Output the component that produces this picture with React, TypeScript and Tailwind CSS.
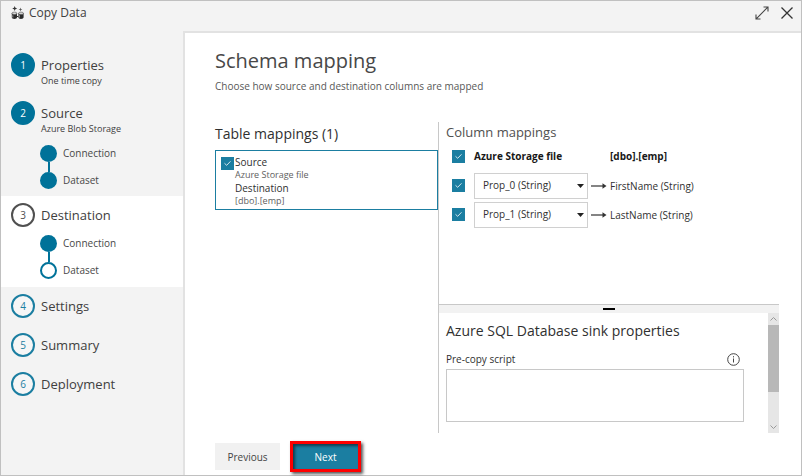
import { useState } from "react";
import type { ReactNode } from "react";

function CopyDataIcon() {
  return (
    <svg width="14" height="14" viewBox="0 0 14 14" aria-hidden="true">
      <path d="M3.7 0l.7 1.8 1.8.7-1.8.7L3.7 5 3 3.2l-1.8-.7L3 1.800z" fill="#333" />
      <path d="M9.500 1.600l.5 1.400 1.400.5-1.400.5-.5 1.400L9 4l-1.400-.5L9 3z" fill="#555" />
      <path d="M.8 7h5.200v4.600q0 1.400-2.600 1.400T.8 11.600zM7.400 7h5.200v4.600q0 1.400-2.600 1.400t-2.600-1.400z" fill="#2a2a2a" />
      <ellipse cx="3.400" cy="7.300" rx="2.500" ry="1.200" fill="#d8d8d8" stroke="#555" strokeWidth=".6" />
      <ellipse cx="10" cy="7.300" rx="2.500" ry="1.200" fill="#d8d8d8" stroke="#555" strokeWidth=".6" />
      <path d="M1.800 9.300v2.200M8.400 9.300v2.200" stroke="#aaa" strokeWidth=".9" />
      <path d="M6 10.500h1.400" stroke="#2a2a2a" />
    </svg>
  );
}

function Check({ label }: { label: string }) {
  const [on, setOn] = useState(true);
  return (
    <span className="grid size-[13px] shrink-0">
      <input
        type="checkbox"
        aria-label={label}
        checked={on}
        onChange={() => setOn(!on)}
        className="col-start-1 row-start-1 size-[13px] appearance-none border border-[#1b7ea1] bg-white checked:bg-[#1b7ea1]"
      />
      {on && (
        <svg viewBox="0 0 13 13" className="pointer-events-none col-start-1 row-start-1 size-[13px]" aria-hidden="true">
          <path d="M3.5 6.3l2.2 2L9.5 4.3" fill="none" stroke="#e4f1f5" strokeWidth="0.9" />
        </svg>
      )}
    </span>
  );
}

type State = "done" | "current" | "todo";

const badge: Record<State, string> = {
  done: "border-[#007299] bg-[#007299] text-white",
  current: "border-[#505050] bg-white text-[#505050]",
  todo: "border-[#1b7ea1] bg-[#f6f6f6] text-[#1b7ea1]",
};

function Step({ n, title, note, state }: { n: number; title: string; note?: string; state: State }) {
  return (
    <a href={"#step-" + n} className="flex gap-1.5 pl-2.5">
      <span className={`flex size-6 shrink-0 items-center justify-center rounded-full border-2 text-[10px] leading-5 ${badge[state]}`}>
        {n}
      </span>
      <span className="flex flex-col">
        <span className="text-[13px] leading-6 text-[#404040]">{title}</span>
        {note && <span className="text-[9px] leading-2 text-[#404040]">{note}</span>}
      </span>
    </a>
  );
}

function SubSteps({ datasetDone }: { datasetDone: boolean }) {
  return (
    <ul className="pl-[39px] text-[10px] leading-[17px] text-[#484848]">
      <li className="flex items-center gap-1.5">
        <span className="size-[17px] rounded-full bg-[#007299]" />
        <a href="#connection">Connection</a>
      </li>
      <li aria-hidden="true" className="ml-2 h-2.5 w-0.5 bg-[#007299]" />
      <li className="flex items-center gap-1.5">
        <span className={`size-[17px] rounded-full border-2 border-[#007299] ${datasetDone ? "bg-[#007299]" : "bg-white"}`} />
        <a href="#dataset">Dataset</a>
      </li>
    </ul>
  );
}

function MappingRow({ from, to }: { from: string; to: string }) {
  return (
    <tr className="h-[29px]">
      <td className="p-0 align-middle">
        <Check label={"Map " + to} />
      </td>
      <td className="p-0">
        <span className="grid items-center">
          <select
            aria-label={"Source column for " + to}
            className="col-start-1 row-start-1 h-[26px] w-full appearance-none border border-[#d0d0d0] bg-white pl-2 text-[10px] text-[#303030]"
          >
            <option>{from}</option>
          </select>
          <svg viewBox="0 0 7 4" className="pointer-events-none col-start-1 row-start-1 mr-1 h-1 w-[7px] justify-self-end" aria-hidden="true">
            <path d="M0 0h7L3.5 4z" fill="#222" />
          </svg>
        </span>
      </td>
      <td className="p-0 pl-[3px]">
        <svg width="16" height="8" viewBox="0 0 16 8" aria-hidden="true">
          <path d="M0 4h13" stroke="#333" strokeWidth="1.2" />
          <path d="M11.5 1.2L15.5 4l-4 2.8z" fill="#333" />
        </svg>
      </td>
      <td className="p-0 text-[10px] leading-4 text-[#303030]">{to}</td>
    </tr>
  );
}

function Pair({ name, value }: { name: ReactNode; value: string }) {
  return (
    <div>
      <dt className="text-[10px] leading-[14px] text-[#303030]">{name}</dt>
      <dd className="text-[9px] leading-3 text-[#606060]">{value}</dd>
    </div>
  );
}

export default function App() {
  return (
    <div className="flex min-h-screen flex-col border border-[#c0c0c0] bg-[#f3f3f3] font-['Open_Sans','Noto_Sans',sans-serif]">
      <header className="flex h-[30px] items-center pr-2 pb-1.5 pl-2.5">
        <CopyDataIcon />
        <h1 className="ml-1 flex-1 text-[12px] leading-6 text-[#404040]">Copy Data</h1>
        <button type="button" aria-label="Expand" className="mr-3">
          <svg width="14" height="14" viewBox="0 0 14 14" fill="none" stroke="#444" strokeWidth="1.1">
            <path d="M1.2 12.8L12.8 1.2M8.5 1h4.5v4.5M1 8.5V13h4.5" />
          </svg>
        </button>
        <button type="button" aria-label="Close">
          <svg width="12" height="12" viewBox="0 0 12 12" fill="none" stroke="#333" strokeWidth="1.3">
            <path d="M.5.5l11 11M11.5.5l-11 11" />
          </svg>
        </button>
      </header>

      <div className="flex flex-1">
        <nav aria-label="Steps" className="w-[182px] shrink-0">
          <div className="pt-[22px]">
            <Step n={1} title="Properties" note="One time copy" state="done" />
          </div>
          <div className="pt-4 pb-[7px]">
            <Step n={2} title="Source" note="Azure Blob Storage" state="done" />
            <div className="pt-3">
              <SubSteps datasetDone />
            </div>
          </div>
          <div className="bg-white pt-[7px] pb-2">
            <Step n={3} title="Destination" state="current" />
            <div className="pt-2">
              <SubSteps datasetDone={false} />
            </div>
          </div>
          <div className="flex flex-col gap-[15px] pt-[7px]">
            <Step n={4} title="Settings" state="todo" />
            <Step n={5} title="Summary" state="todo" />
            <Step n={6} title="Deployment" state="todo" />
          </div>
        </nav>

        <main className="flex min-w-0 flex-1 flex-col border-t-2 border-l-2 border-[#e2e2e2] bg-white pr-[22px] pl-[30px]">
          <h2 className="pt-3 text-[20px] leading-8 text-[#484848]">Schema mapping</h2>
          <p className="pt-px text-[10px] leading-4 text-[#585858]">Choose how source and destination columns are mapped</p>

          <div className="mt-7 flex h-[311px]">
            <section className="w-[223px] shrink-0">
              <h3 className="pb-1 text-[14px] leading-6 text-[#303030]">Table mappings (1)</h3>
              <div className="flex h-[60px] border border-[#1b7ea1] pt-1 pl-[5px]">
                <span className="mr-px pt-0.5">
                  <Check label="Source to destination" />
                </span>
                <dl>
                  <Pair name="Source" value="Azure Storage file" />
                  <Pair name="Destination" value="[dbo].[emp]" />
                </dl>
              </div>
            </section>

            <div className="flex min-w-0 flex-1 flex-col border-l border-[#c8c8c8]">
              <section className="h-[182px] pl-[7px]">
                <h3 className="text-[13px] leading-[21px] text-[#505050]">Column mappings</h3>
                <table className="ml-1.5 table-fixed border-collapse text-left">
                  <colgroup>
                    <col className="w-[22px]" />
                    <col className="w-[114px]" />
                    <col className="w-[22px]" />
                    <col className="w-[140px]" />
                  </colgroup>
                  <thead>
                    <tr className="h-7 text-[10px] leading-4 text-[#181818]">
                      <th className="p-0 pb-0.5">
                        <Check label="Map all columns" />
                      </th>
                      <th className="p-0 pb-0.5 font-bold">Azure Storage file</th>
                      <th className="p-0" />
                      <th className="p-0 pb-0.5 font-bold">[dbo].[emp]</th>
                    </tr>
                  </thead>
                  <tbody>
                    <MappingRow from="Prop_0 (String)" to="FirstName (String)" />
                    <MappingRow from="Prop_1 (String)" to="LastName (String)" />
                  </tbody>
                </table>
              </section>

              <div role="separator" className="flex h-[9px] items-center justify-center border-t border-[#c8c8c8] bg-[#f2f2f2]">
                <span className="h-0.5 w-3 bg-black" />
              </div>

              <section className="flex flex-1">
                <div className="flex flex-1 flex-col pr-6 pl-[7px]">
                  <h3 className="pt-1.5 text-[14px] leading-6 text-[#303030]">Azure SQL Database sink properties</h3>
                  <div className="flex items-center justify-between pt-2 pr-1">
                    <label htmlFor="pre-copy" className="text-[10px] leading-4 text-[#303030]">
                      Pre-copy script
                    </label>
                    <svg width="13" height="13" viewBox="0 0 13 13" fill="none" stroke="#444" aria-hidden="true">
                      <circle cx="6.5" cy="6.5" r="5.8" />
                      <path d="M6.5 5.5v4M6.5 3.2v1.2" />
                    </svg>
                  </div>
                  <textarea id="pre-copy" className="mt-0.5 block h-[53px] resize-none border border-[#c8c8c8] bg-white text-[10px]" />
                </div>
                <div aria-hidden="true" className="flex w-[11px] flex-col items-center bg-[#e6e6e6]">
                  <svg width="11" height="12" viewBox="0 0 11 12" fill="none" stroke="#999">
                    <path d="M2.5 7.5l3-3 3 3" />
                  </svg>
                  <span className="h-[67px] w-full bg-[#b8b8b8]" />
                  <svg width="11" height="12" viewBox="0 0 11 12" className="mt-auto" fill="none" stroke="#999">
                    <path d="M2.5 4.5l3 3 3-3" />
                  </svg>
                </div>
              </section>
            </div>
          </div>

          <footer className="flex items-start gap-2.5 pt-2">
            <button type="button" className="mt-0.5 h-[27px] w-[65px] bg-[#f1f1f1] text-[10px] leading-4 text-[#444]">
              Previous
            </button>
            <button
              type="button"
              className="h-[31px] w-[71px] border-3 border-[#fe0000] bg-[#1b7ea1] text-[10px] leading-4 text-white shadow-[2px_2px_3px_#555,inset_2px_2px_3px_#123c4d]"
            >
              Next
            </button>
          </footer>
        </main>
      </div>
    </div>
  );
}
